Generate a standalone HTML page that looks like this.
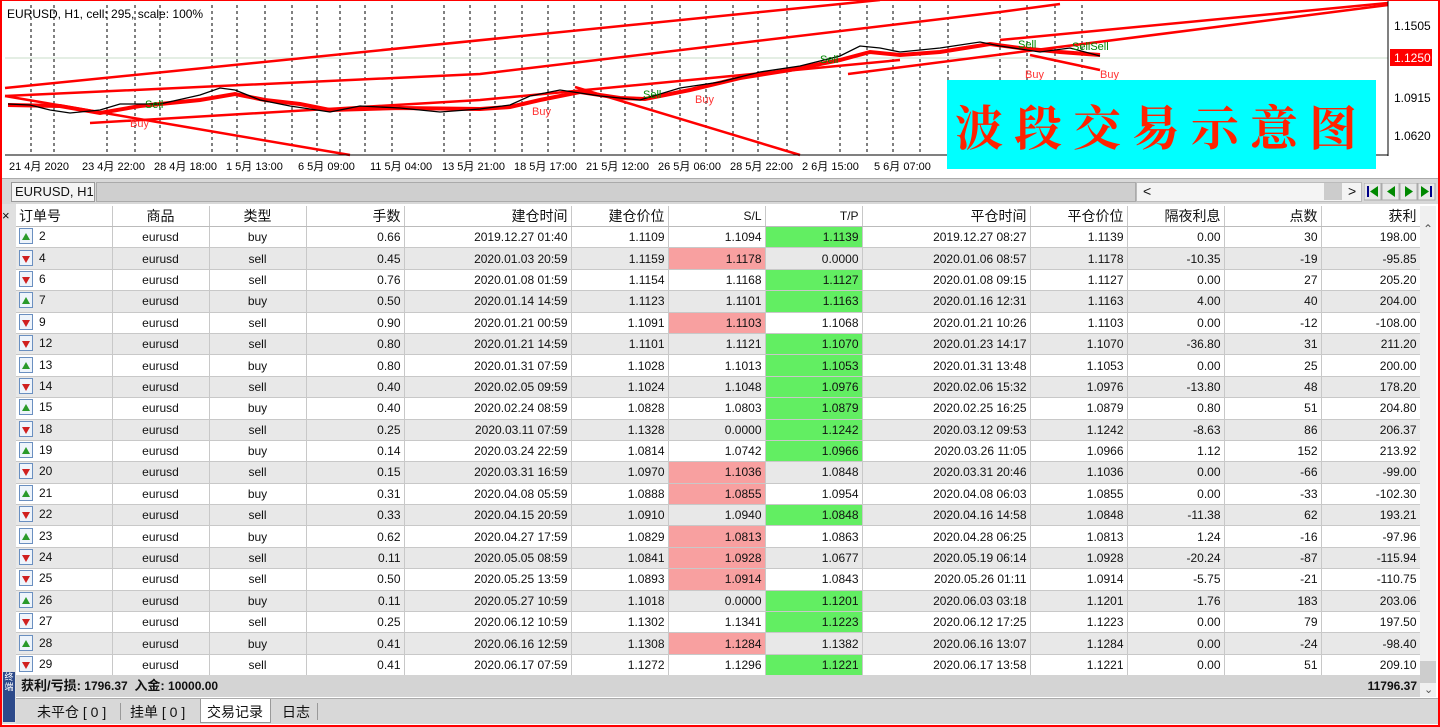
<!DOCTYPE html>
<html><head><meta charset="utf-8">
<style>
*{margin:0;padding:0;box-sizing:border-box}
body{width:1440px;height:727px;overflow:hidden;background:#fff;font-family:"Liberation Sans","Noto Sans CJK SC",sans-serif;font-size:12px;color:#111;position:relative}
.abs{position:absolute}
table{border-collapse:collapse;table-layout:fixed;position:absolute;left:16px;top:206px}
td{height:21.4px;padding:0 3px;white-space:nowrap;border-right:1px solid #c8c8c8;border-bottom:1px solid #c8c8c8;text-align:right;font-size:12px}
tr.h td{height:20px;font-size:14px;background:#fff;border-bottom:1px solid #bbb;font-family:"Liberation Sans","Noto Sans CJK SC",sans-serif}
tr.g td{background:#e8e8e8}
td.c{text-align:center}
td.l{text-align:left}
td.p{background:#f8a0a0!important}
td.gr{background:#62ee62!important}
.ico{display:inline-block;width:14px;height:16px;border:1px solid #6a8fc0;background:#eef4fb;vertical-align:middle;margin:0 6px 0 0;position:relative;top:-1px}
.ico b{position:absolute;left:2px;top:4px;width:0;height:0;border-left:4px solid transparent;border-right:4px solid transparent}
.up b{border-bottom:7px solid #2a9a2a}
.dn b{border-top:7px solid #d02020;top:5px}
.tab{position:absolute;top:702px;height:20px;font-size:14px;line-height:20px}
</style></head><body>

<svg class="abs" style="left:0;top:0" width="1440" height="180">
<rect x="0" y="0" width="1440" height="180" fill="#fff"/>
<g stroke="#000" stroke-dasharray="3,3" stroke-width="1">
<line x1="31" y1="5" x2="31" y2="155"/><line x1="54" y1="5" x2="54" y2="155"/><line x1="107" y1="5" x2="107" y2="155"/><line x1="135" y1="5" x2="135" y2="155"/><line x1="160" y1="5" x2="160" y2="155"/><line x1="212" y1="5" x2="212" y2="155"/><line x1="237" y1="5" x2="237" y2="155"/><line x1="265" y1="5" x2="265" y2="155"/><line x1="292" y1="5" x2="292" y2="155"/><line x1="317" y1="5" x2="317" y2="155"/><line x1="340" y1="5" x2="340" y2="155"/><line x1="365" y1="5" x2="365" y2="155"/><line x1="392" y1="5" x2="392" y2="155"/><line x1="444" y1="5" x2="444" y2="155"/><line x1="470" y1="5" x2="470" y2="155"/><line x1="495" y1="5" x2="495" y2="155"/><line x1="522" y1="5" x2="522" y2="155"/><line x1="548" y1="5" x2="548" y2="155"/><line x1="574" y1="5" x2="574" y2="155"/><line x1="601" y1="5" x2="601" y2="155"/><line x1="625" y1="5" x2="625" y2="155"/><line x1="652" y1="5" x2="652" y2="155"/><line x1="680" y1="5" x2="680" y2="155"/><line x1="706" y1="5" x2="706" y2="155"/><line x1="733" y1="5" x2="733" y2="155"/><line x1="758" y1="5" x2="758" y2="155"/><line x1="787" y1="5" x2="787" y2="155"/><line x1="840" y1="5" x2="840" y2="155"/><line x1="867" y1="5" x2="867" y2="155"/><line x1="893" y1="5" x2="893" y2="155"/><line x1="920" y1="5" x2="920" y2="155"/><line x1="948" y1="5" x2="948" y2="155"/><line x1="1000" y1="5" x2="1000" y2="155"/><line x1="1027" y1="5" x2="1027" y2="155"/><line x1="1055" y1="5" x2="1055" y2="155"/><line x1="1082" y1="5" x2="1082" y2="155"/>
</g>
<line x1="5" y1="58" x2="1388" y2="58" stroke="#c8dcc8"/>
<g stroke="#f00" stroke-width="2.5" fill="none">
<line x1="5" y1="88" x2="880" y2="0"/>
<polyline points="5,96 480,74 1000,12 1060,4"/>
<polyline points="90,123 480,100 900,60"/>
<line x1="848" y1="74" x2="1388" y2="5"/>
<line x1="1000" y1="40" x2="1388" y2="3"/>
<line x1="5" y1="96" x2="350" y2="155"/>
<line x1="575" y1="87" x2="800" y2="155"/>
<line x1="1030" y1="55" x2="1100" y2="70"/>
<polyline stroke-width="4" points="8,105 60,106 100,113 140,106 200,100 235,94 265,100 300,104 330,110 400,108 480,109 510,107 540,100 580,92 620,98 645,99 690,90 740,78 790,70 840,60 870,52 900,55 940,52 990,44 1020,48 1060,52 1100,55"/>
</g>
<polyline fill="none" stroke="#000" stroke-width="1.3" points="8,104 30,105 50,110 70,113 100,110 120,104 160,104 200,95 220,88 235,90 260,100 290,106 330,112 360,106 400,108 440,112 480,109 510,105 530,96 560,90 600,96 640,100 680,88 720,82 760,72 800,66 840,56 860,46 880,48 900,52 940,48 980,42 1000,46 1040,52 1070,48 1100,56"/>
<g font-size="11" font-family="Liberation Sans,sans-serif">
<text x="130" y="127" fill="#f33">Buy</text><text x="145" y="108" fill="#080">Sell</text>
<text x="532" y="115" fill="#f33">Buy</text><text x="695" y="103" fill="#f33">Buy</text>
<text x="643" y="98" fill="#080">Sell</text><text x="820" y="63" fill="#080">Sell</text>
<text x="1025" y="78" fill="#f33">Buy</text><text x="1100" y="78" fill="#f33">Buy</text>
<text x="1072" y="50" fill="#080">SellSell</text><text x="1018" y="48" fill="#080">Sell</text>
</g>
<line x1="1388" y1="0" x2="1388" y2="156" stroke="#000"/>
<line x1="5" y1="155" x2="1388" y2="155" stroke="#000"/>
<g font-size="12" fill="#000">
<text x="1394" y="30">1.1505</text><text x="1394" y="102">1.0915</text><text x="1394" y="140">1.0620</text>
</g>
<rect x="1390" y="49" width="42" height="17" fill="#f00"/><text x="1394" y="62" font-size="12" fill="#fff">1.1250</text>
<g font-size="11" fill="#000">
<text x="9" y="170">21 4月 2020</text><text x="82" y="170">23 4月 22:00</text><text x="154" y="170">28 4月 18:00</text><text x="226" y="170">1 5月 13:00</text><text x="298" y="170">6 5月 09:00</text><text x="370" y="170">11 5月 04:00</text><text x="442" y="170">13 5月 21:00</text><text x="514" y="170">18 5月 17:00</text><text x="586" y="170">21 5月 12:00</text><text x="658" y="170">26 5月 06:00</text><text x="730" y="170">28 5月 22:00</text><text x="802" y="170">2 6月 15:00</text><text x="874" y="170">5 6月 07:00</text>
</g>
<text x="7" y="18" font-size="12" fill="#000">EURUSD, H1, cell: 295, scale: 100%</text>
</svg>
<div class="abs" style="left:947px;top:80px;width:429px;height:89px;background:#0ff;color:#f20;font-family:'Noto Serif CJK SC',serif;font-size:48px;line-height:89px;letter-spacing:11px;padding-left:8px;font-weight:bold;white-space:nowrap;overflow:hidden">波段交易示意图</div>

<div class="abs" style="left:0;top:178px;width:1440px;height:26px;background:#d8d8d8;border-top:1px solid #aaa"></div>
<div class="abs" style="left:11px;top:182px;width:84px;height:20px;background:#f4f4f4;border:1px solid #999;font-size:13px;line-height:18px;padding-left:3px">EURUSD, H1</div>
<div class="abs" style="left:96px;top:182px;width:1040px;height:20px;background:#cfcfcf;border:1px solid #aaa"></div>
<div class="abs" style="left:1136px;top:182px;width:226px;height:20px;background:#f4f4f4;border:1px solid #bbb"></div>
<div class="abs" style="left:1143px;top:183px;font-size:14px">&lt;</div>
<div class="abs" style="left:1324px;top:183px;width:18px;height:17px;background:#ccc"></div>
<div class="abs" style="left:1348px;top:183px;font-size:14px">&gt;</div>
<svg class="abs" style="left:1364px;top:183px" width="72" height="18">
<rect x="0" y="0" width="17" height="17" fill="#e8e8e8" stroke="#aaa"/><rect x="3" y="3" width="2" height="11" fill="#008"/><polygon points="14,3 6,8.5 14,14" fill="#080"/>
<rect x="18" y="0" width="17" height="17" fill="#e8e8e8" stroke="#aaa"/><polygon points="31,3 23,8.5 31,14" fill="#080"/>
<rect x="36" y="0" width="17" height="17" fill="#e8e8e8" stroke="#aaa"/><polygon points="41,3 49,8.5 41,14" fill="#080"/>
<rect x="54" y="0" width="17" height="17" fill="#e8e8e8" stroke="#aaa"/><polygon points="57,3 65,8.5 57,14" fill="#080"/><rect x="66" y="3" width="2" height="11" fill="#008"/>
</svg>

<div class="abs" style="left:0;top:204px;width:16px;height:520px;background:#e0e0e0"></div>
<div class="abs" style="left:2px;top:208px;font-size:13px">×</div>
<div class="abs" style="left:3px;top:672px;width:12px;height:50px;background:#2d4a8a;color:#fff;font-size:9px;line-height:10px;text-align:center">终端</div>

<table>
<colgroup><col style="width:96px"><col style="width:97px"><col style="width:97px"><col style="width:98px"><col style="width:167px"><col style="width:97px"><col style="width:97px"><col style="width:97px"><col style="width:168px"><col style="width:97px"><col style="width:97px"><col style="width:97px"><col style="width:99px"></colgroup>
<tr class="h"><td class="l">订单号</td><td class="c">商品</td><td class="c">类型</td><td>手数</td><td>建仓时间</td><td>建仓价位</td><td style="font-size:12px">S/L</td><td style="font-size:12px">T/P</td><td>平仓时间</td><td>平仓价位</td><td>隔夜利息</td><td>点数</td><td>获利</td></tr>
<tr><td class="l"><span class="ico up"><b></b></span>2</td><td class="c">eurusd</td><td class="c">buy</td><td>0.66</td><td>2019.12.27 01:40</td><td>1.1109</td><td>1.1094</td><td class="gr">1.1139</td><td>2019.12.27 08:27</td><td>1.1139</td><td>0.00</td><td>30</td><td>198.00</td></tr>
<tr class="g"><td class="l"><span class="ico dn"><b></b></span>4</td><td class="c">eurusd</td><td class="c">sell</td><td>0.45</td><td>2020.01.03 20:59</td><td>1.1159</td><td class="p">1.1178</td><td>0.0000</td><td>2020.01.06 08:57</td><td>1.1178</td><td>-10.35</td><td>-19</td><td>-95.85</td></tr>
<tr><td class="l"><span class="ico dn"><b></b></span>6</td><td class="c">eurusd</td><td class="c">sell</td><td>0.76</td><td>2020.01.08 01:59</td><td>1.1154</td><td>1.1168</td><td class="gr">1.1127</td><td>2020.01.08 09:15</td><td>1.1127</td><td>0.00</td><td>27</td><td>205.20</td></tr>
<tr class="g"><td class="l"><span class="ico up"><b></b></span>7</td><td class="c">eurusd</td><td class="c">buy</td><td>0.50</td><td>2020.01.14 14:59</td><td>1.1123</td><td>1.1101</td><td class="gr">1.1163</td><td>2020.01.16 12:31</td><td>1.1163</td><td>4.00</td><td>40</td><td>204.00</td></tr>
<tr><td class="l"><span class="ico dn"><b></b></span>9</td><td class="c">eurusd</td><td class="c">sell</td><td>0.90</td><td>2020.01.21 00:59</td><td>1.1091</td><td class="p">1.1103</td><td>1.1068</td><td>2020.01.21 10:26</td><td>1.1103</td><td>0.00</td><td>-12</td><td>-108.00</td></tr>
<tr class="g"><td class="l"><span class="ico dn"><b></b></span>12</td><td class="c">eurusd</td><td class="c">sell</td><td>0.80</td><td>2020.01.21 14:59</td><td>1.1101</td><td>1.1121</td><td class="gr">1.1070</td><td>2020.01.23 14:17</td><td>1.1070</td><td>-36.80</td><td>31</td><td>211.20</td></tr>
<tr><td class="l"><span class="ico up"><b></b></span>13</td><td class="c">eurusd</td><td class="c">buy</td><td>0.80</td><td>2020.01.31 07:59</td><td>1.1028</td><td>1.1013</td><td class="gr">1.1053</td><td>2020.01.31 13:48</td><td>1.1053</td><td>0.00</td><td>25</td><td>200.00</td></tr>
<tr class="g"><td class="l"><span class="ico dn"><b></b></span>14</td><td class="c">eurusd</td><td class="c">sell</td><td>0.40</td><td>2020.02.05 09:59</td><td>1.1024</td><td>1.1048</td><td class="gr">1.0976</td><td>2020.02.06 15:32</td><td>1.0976</td><td>-13.80</td><td>48</td><td>178.20</td></tr>
<tr><td class="l"><span class="ico up"><b></b></span>15</td><td class="c">eurusd</td><td class="c">buy</td><td>0.40</td><td>2020.02.24 08:59</td><td>1.0828</td><td>1.0803</td><td class="gr">1.0879</td><td>2020.02.25 16:25</td><td>1.0879</td><td>0.80</td><td>51</td><td>204.80</td></tr>
<tr class="g"><td class="l"><span class="ico dn"><b></b></span>18</td><td class="c">eurusd</td><td class="c">sell</td><td>0.25</td><td>2020.03.11 07:59</td><td>1.1328</td><td>0.0000</td><td class="gr">1.1242</td><td>2020.03.12 09:53</td><td>1.1242</td><td>-8.63</td><td>86</td><td>206.37</td></tr>
<tr><td class="l"><span class="ico up"><b></b></span>19</td><td class="c">eurusd</td><td class="c">buy</td><td>0.14</td><td>2020.03.24 22:59</td><td>1.0814</td><td>1.0742</td><td class="gr">1.0966</td><td>2020.03.26 11:05</td><td>1.0966</td><td>1.12</td><td>152</td><td>213.92</td></tr>
<tr class="g"><td class="l"><span class="ico dn"><b></b></span>20</td><td class="c">eurusd</td><td class="c">sell</td><td>0.15</td><td>2020.03.31 16:59</td><td>1.0970</td><td class="p">1.1036</td><td>1.0848</td><td>2020.03.31 20:46</td><td>1.1036</td><td>0.00</td><td>-66</td><td>-99.00</td></tr>
<tr><td class="l"><span class="ico up"><b></b></span>21</td><td class="c">eurusd</td><td class="c">buy</td><td>0.31</td><td>2020.04.08 05:59</td><td>1.0888</td><td class="p">1.0855</td><td>1.0954</td><td>2020.04.08 06:03</td><td>1.0855</td><td>0.00</td><td>-33</td><td>-102.30</td></tr>
<tr class="g"><td class="l"><span class="ico dn"><b></b></span>22</td><td class="c">eurusd</td><td class="c">sell</td><td>0.33</td><td>2020.04.15 20:59</td><td>1.0910</td><td>1.0940</td><td class="gr">1.0848</td><td>2020.04.16 14:58</td><td>1.0848</td><td>-11.38</td><td>62</td><td>193.21</td></tr>
<tr><td class="l"><span class="ico up"><b></b></span>23</td><td class="c">eurusd</td><td class="c">buy</td><td>0.62</td><td>2020.04.27 17:59</td><td>1.0829</td><td class="p">1.0813</td><td>1.0863</td><td>2020.04.28 06:25</td><td>1.0813</td><td>1.24</td><td>-16</td><td>-97.96</td></tr>
<tr class="g"><td class="l"><span class="ico dn"><b></b></span>24</td><td class="c">eurusd</td><td class="c">sell</td><td>0.11</td><td>2020.05.05 08:59</td><td>1.0841</td><td class="p">1.0928</td><td>1.0677</td><td>2020.05.19 06:14</td><td>1.0928</td><td>-20.24</td><td>-87</td><td>-115.94</td></tr>
<tr><td class="l"><span class="ico dn"><b></b></span>25</td><td class="c">eurusd</td><td class="c">sell</td><td>0.50</td><td>2020.05.25 13:59</td><td>1.0893</td><td class="p">1.0914</td><td>1.0843</td><td>2020.05.26 01:11</td><td>1.0914</td><td>-5.75</td><td>-21</td><td>-110.75</td></tr>
<tr class="g"><td class="l"><span class="ico up"><b></b></span>26</td><td class="c">eurusd</td><td class="c">buy</td><td>0.11</td><td>2020.05.27 10:59</td><td>1.1018</td><td>0.0000</td><td class="gr">1.1201</td><td>2020.06.03 03:18</td><td>1.1201</td><td>1.76</td><td>183</td><td>203.06</td></tr>
<tr><td class="l"><span class="ico dn"><b></b></span>27</td><td class="c">eurusd</td><td class="c">sell</td><td>0.25</td><td>2020.06.12 10:59</td><td>1.1302</td><td>1.1341</td><td class="gr">1.1223</td><td>2020.06.12 17:25</td><td>1.1223</td><td>0.00</td><td>79</td><td>197.50</td></tr>
<tr class="g"><td class="l"><span class="ico up"><b></b></span>28</td><td class="c">eurusd</td><td class="c">buy</td><td>0.41</td><td>2020.06.16 12:59</td><td>1.1308</td><td class="p">1.1284</td><td>1.1382</td><td>2020.06.16 13:07</td><td>1.1284</td><td>0.00</td><td>-24</td><td>-98.40</td></tr>
<tr><td class="l"><span class="ico dn"><b></b></span>29</td><td class="c">eurusd</td><td class="c">sell</td><td>0.41</td><td>2020.06.17 07:59</td><td>1.1272</td><td>1.1296</td><td class="gr">1.1221</td><td>2020.06.17 13:58</td><td>1.1221</td><td>0.00</td><td>51</td><td>209.10</td></tr>
</table>

<div class="abs" style="left:16px;top:675px;width:1404px;height:22px;background:#d4d4d4;font-weight:bold;font-size:12px;line-height:22px;padding-left:5px"><span style="font-size:13px">获利/亏损:</span> 1796.37 &nbsp;<span style="font-size:13px">入金:</span> 10000.00<span style="position:absolute;right:3px">11796.37</span></div>
<div class="abs" style="left:1420px;top:206px;width:16px;height:491px;background:#f0f0f0"></div>
<div class="abs" style="left:1423px;top:222px;font-size:12px;color:#555">⌃</div>
<div class="abs" style="left:1420px;top:661px;width:16px;height:22px;background:#cdcdcd"></div>
<div class="abs" style="left:1424px;top:683px;font-size:11px;color:#555">⌄</div>

<div class="abs" style="left:16px;top:698px;width:1422px;height:26px;background:#d8d8d8;border-top:1px solid #aaa"></div>
<div class="tab" style="left:37px">未平仓 [ 0 ]</div>
<div class="abs" style="left:120px;top:703px;width:1px;height:17px;background:#999"></div>
<div class="tab" style="left:130px">挂单 [ 0 ]</div>
<div class="abs" style="left:200px;top:699px;width:71px;height:24px;background:#fff;border:1px solid #999;border-top:none"></div>
<div class="tab" style="left:207px">交易记录</div>
<div class="tab" style="left:282px">日志</div>
<div class="abs" style="left:317px;top:703px;width:1px;height:17px;background:#999"></div>

<div class="abs" style="left:0;top:0;width:1440px;height:727px;border:2px solid #f00;border-top-width:1px;pointer-events:none"></div>
<div class="abs" style="left:0;top:0;width:5px;height:727px;border-left:2px solid #f00"></div>
</body></html>
